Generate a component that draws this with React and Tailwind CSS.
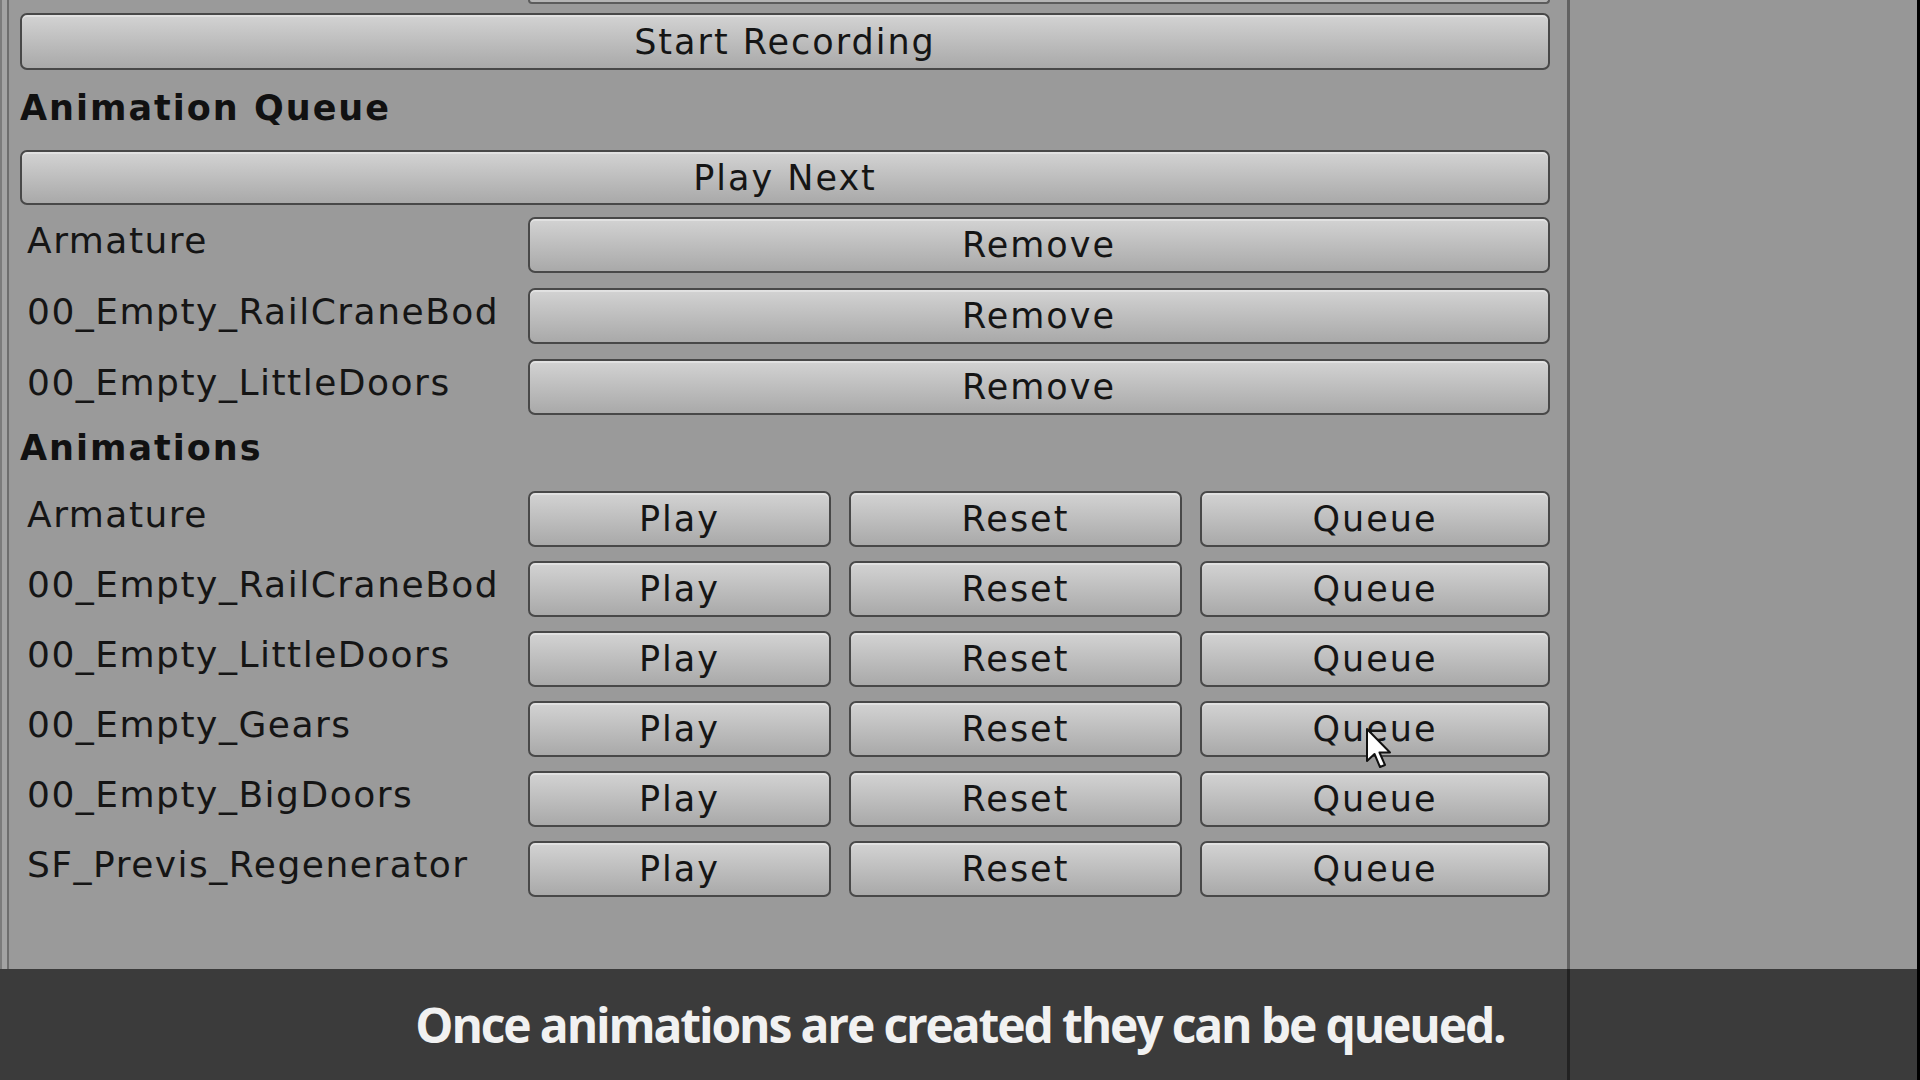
import React from 'react';

const queue = ['Armature', '00_Empty_RailCraneBod', '00_Empty_LittleDoors'];
const animations = [
  'Armature',
  '00_Empty_RailCraneBod',
  '00_Empty_LittleDoors',
  '00_Empty_Gears',
  '00_Empty_BigDoors',
  'SF_Previs_Regenerator',
];

const Btn = ({ children, className = '' }) => (
  <button
    className={`h-full rounded-[7px] border-2 border-[#484848] bg-linear-to-b from-[#d3d3d3] to-[#a9a9a9] shadow-[inset_0_2px_0_rgba(255,255,255,0.35)] text-[#151515] text-[35px] leading-[40px] tracking-[2px] flex items-center justify-center ${className}`}
  >
    {children}
  </button>
);

const Label = ({ children }) => (
  <div className="w-[508px] shrink-0 pl-[7px] pt-[4px] text-[36px] leading-[40px] tracking-[1.5px] text-[#151515] whitespace-nowrap">
    {children}
  </div>
);

const Heading = ({ children, className = '' }) => (
  <div className={`h-[40px] text-[35px] leading-[40px] font-bold tracking-[2px] text-[#111] ${className}`}>
    {children}
  </div>
);

const Cursor = () => (
  <svg className="absolute left-[1365px] top-[727px]" width="28" height="44" viewBox="0 0 28 44">
    <path
      d="M2 2 L2 34 L9.5 27 L15 40 L20 38 L14.5 25.5 L25 25.5 Z"
      fill="#fff"
      stroke="#111"
      strokeWidth="2"
      strokeLinejoin="round"
    />
  </svg>
);

export default function App() {
  return (
    <div className="relative w-[1920px] h-[1080px] overflow-hidden flex flex-col bg-[#979797] font-['DejaVu_Sans',sans-serif]">
      <div className="flex flex-1 min-h-0">
        {/* inspector panel */}
        <div className="w-[1570px] shrink-0 flex bg-[#9a9a9a] border-r-[3px] border-[#626262]">
          <div className="w-[9px] shrink-0 border-l-2 border-r-2 border-l-[#7c7c7c] border-r-[#6e6e6e] bg-[#a3a3a3]" />
          <div className="flex-1 flex flex-col pl-[11px] pr-[17px]">
            <div className="ml-[508px] h-[4px] rounded-b-[5px] border-x-2 border-b-2 border-[#5c5c5c] bg-[#b4b4b4]" />
            <div className="mt-[9px] h-[57px] flex">
              <Btn className="flex-1">Start Recording</Btn>
            </div>

            <Heading className="mt-[18px]">Animation Queue</Heading>
            <div className="mt-[22px] h-[55px] flex">
              <Btn className="flex-1">Play Next</Btn>
            </div>

            <div className="mt-[12px] flex flex-col gap-[15px]">
              {queue.map((name) => (
                <div key={name} className="h-[56px] flex">
                  <Label>{name}</Label>
                  <Btn className="flex-1">Remove</Btn>
                </div>
              ))}
            </div>

            <Heading className="mt-[13px]">Animations</Heading>
            <div className="mt-[23px] flex flex-col gap-[14px]">
              {animations.map((name) => (
                <div key={name} className="h-[56px] flex">
                  <Label>{name}</Label>
                  <div className="flex-1 grid grid-cols-[303px_333px_350px] gap-[18px]">
                    <Btn>Play</Btn>
                    <Btn>Reset</Btn>
                    <Btn>Queue</Btn>
                  </div>
                </div>
              ))}
            </div>
          </div>
        </div>
        <div className="flex-1 border-r-[3px] border-black" />
      </div>

      {/* caption bar */}
      <div className="relative h-[111px] shrink-0 bg-[#3b3b3b] flex items-center justify-center">
        <div className="absolute left-[1567px] top-0 bottom-0 w-[3px] bg-[#222]" />
        <div className="absolute right-0 top-0 bottom-0 w-[3px] bg-black" />
        <span className="text-[48px] leading-none font-bold tracking-[-0.045em] text-[#f1f1f1] font-['Open_Sans',sans-serif]">
          Once animations are created they can be queued.
        </span>
      </div>

      <Cursor />
    </div>
  );
}
